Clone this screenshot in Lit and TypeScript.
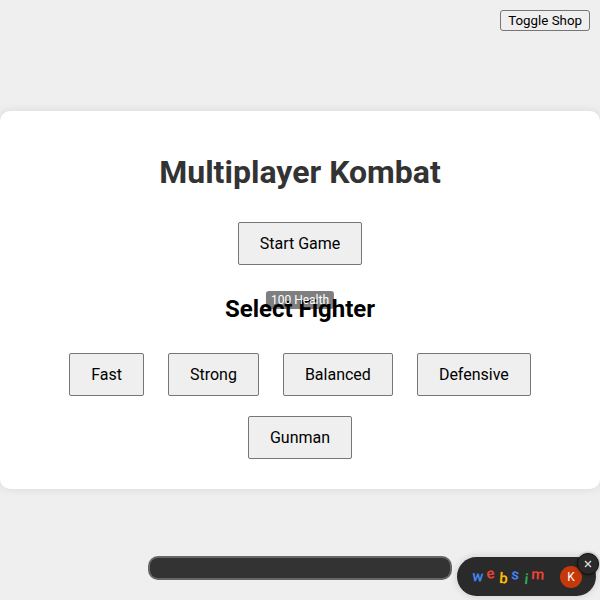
import { LitElement, html, css } from "lit";
import { customElement, state } from "lit/decorators.js";

const FIGHTERS = ["Fast", "Strong", "Balanced", "Defensive", "Gunman"];

@customElement("app-root")
export class AppRoot extends LitElement {
  static styles = css`
    :host {
      display: flex;
      flex-direction: column;
      justify-content: center;
      position: relative;
      min-height: 100vh;
      background: #efefef;
      color: #000;
      font-family: Roboto, "Liberation Sans", sans-serif;
    }
    button {
      font-family: inherit;
      color: #000;
      background: #efefef;
      border: 1px solid #767676;
      border-radius: 3px;
      cursor: pointer;
    }
    .menu {
      display: flex;
      flex-direction: column;
      align-items: center;
      padding: 20px;
      background: #fff;
      border-radius: 10px;
      box-shadow: 0 0 10px rgba(0, 0, 0, 0.1);
    }
    h1 {
      margin: 22px 0 21px;
      font-size: 32px;
      line-height: 38px;
      color: #333;
    }
    h2 {
      margin: 20px 0;
      font-size: 24px;
      line-height: 28px;
    }
    .choice {
      margin: 10px;
      padding: 10px 21px;
      border-radius: 2px;
      font-size: 16px;
      line-height: 21px;
    }
    .fighters {
      display: flex;
      flex-wrap: wrap;
      justify-content: center;
      column-gap: 4px;
    }
    .shop {
      position: absolute;
      top: 10px;
      right: 10px;
      padding: 1px 7px;
      line-height: 17px;
    }
    .health {
      position: absolute;
      top: 291px;
      left: 50%;
      transform: translateX(-50%);
      padding: 2px 5px;
      border-radius: 3px;
      background: rgba(0, 0, 0, 0.5);
      color: #fff;
      font-size: 12px;
      line-height: 14px;
    }
    .bar {
      position: absolute;
      bottom: 20px;
      left: 50%;
      transform: translateX(-50%);
      box-sizing: border-box;
      width: 304px;
      height: 24px;
      border: 2px solid #666;
      border-radius: 10px;
      background: #333;
    }
    .badge {
      position: absolute;
      right: 4px;
      bottom: 4px;
      box-sizing: border-box;
      display: flex;
      align-items: center;
      justify-content: space-between;
      width: 139px;
      height: 39px;
      padding: 0 14px;
      border-radius: 20px;
      background: #2a2a2a;
      box-shadow: 0 0 8px rgba(0, 0, 0, 0.15);
    }
    .logo {
      display: block;
      width: 74px;
      height: 24px;
      overflow: visible;
      font-size: 15px;
      font-weight: 600;
    }
    .blue { fill: #4285f4; }
    .red { fill: #ea4335; }
    .yellow { fill: #fbbc05; }
    .green { fill: #34a853; }
    .avatar {
      width: 22px;
      height: 22px;
      border-radius: 50%;
      background: #c4380a;
      color: #fff;
      font-size: 12px;
      line-height: 22px;
      text-align: center;
    }
    .close {
      position: absolute;
      top: -4px;
      right: -3px;
      display: grid;
      place-items: center;
      box-sizing: border-box;
      width: 22px;
      height: 22px;
      padding: 0;
      border: 1px solid #111;
      border-radius: 50%;
      background: #2a2a2a;
      box-shadow: 0 0 3px rgba(0, 0, 0, 0.5);
    }
    .close svg {
      width: 8px;
      height: 8px;
      stroke: #ddd;
      stroke-width: 1.3;
    }
  `;

  @state() private badgeOpen = true;

  render() {
    return html`
      <button class="shop">Toggle Shop</button>
      <main class="menu">
        <h1>Multiplayer Kombat</h1>
        <button class="choice">Start Game</button>
        <h2>Select Fighter</h2>
        <div class="fighters">
          ${FIGHTERS.map((name) => html`<button class="choice">${name}</button>`)}
        </div>
      </main>
      <div class="health">100 Health</div>
      <div class="bar"></div>
      ${this.badgeOpen
        ? html`<aside class="badge">
            <svg class="logo" viewBox="0 0 74 24" role="img" aria-label="websim">
              <text><tspan class="blue" x="1" y="16" rotate="4">w</tspan><tspan class="red" x="16" y="14" rotate="-8">e</tspan><tspan class="yellow" x="28" y="18" rotate="4">b</tspan><tspan class="blue" x="40" y="14" rotate="6">s</tspan><tspan class="green" x="53" y="19" rotate="6">i</tspan><tspan class="red" x="60" y="14" rotate="3">m</tspan></text>
            </svg>
            <span class="avatar">K</span>
            <button class="close" aria-label="Close" @click=${() => (this.badgeOpen = false)}>
              <svg viewBox="0 0 8 8"><path d="M1 1L7 7M7 1L1 7" /></svg>
            </button>
          </aside>`
        : null}
    `;
  }
}
